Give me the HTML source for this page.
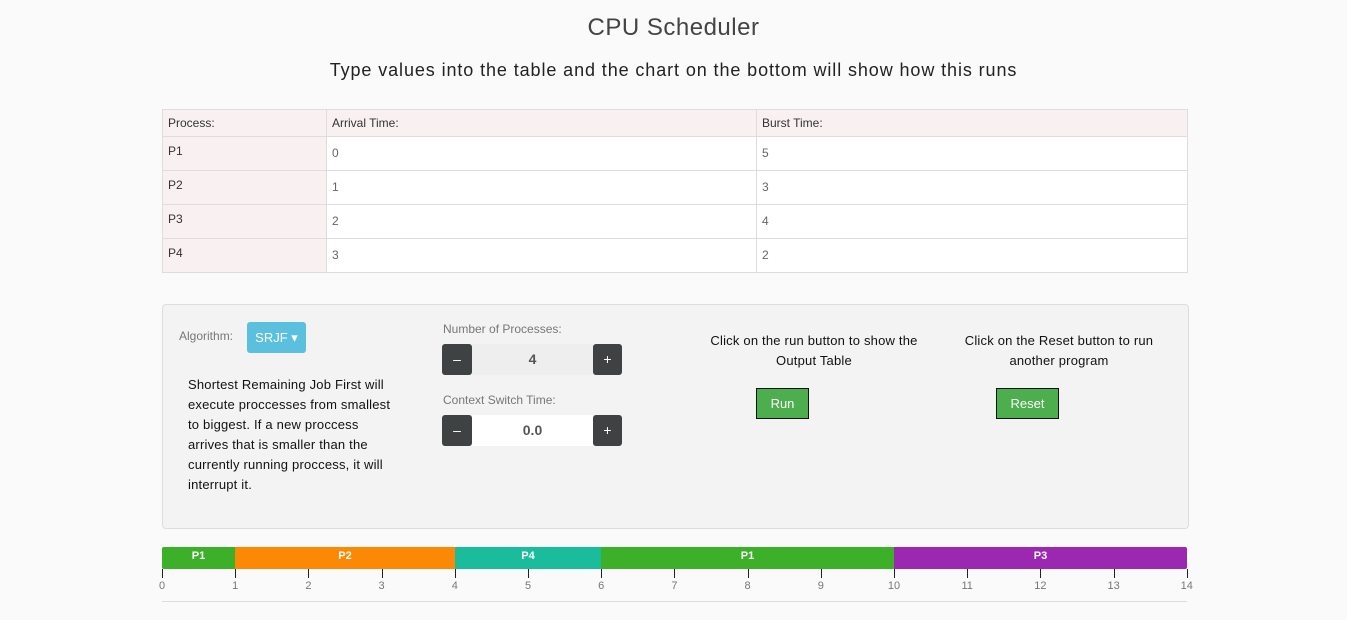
<!DOCTYPE html>
<html><head><style>
body{margin:0;width:1347px;height:620px;background:#fafafa;font-family:"Liberation Sans",sans-serif;position:relative;overflow:hidden;color:#333}
.a{position:absolute}
h1{position:absolute;top:14px;left:0;width:1347px;text-align:center;font-weight:normal;font-size:24px;margin:0;color:#444;letter-spacing:0.5px}
.sub{top:60px;left:0;width:1347px;text-align:center;font-size:18px;color:#222;letter-spacing:0.9px}
table{position:absolute;left:162px;top:109px;width:1026px;border-collapse:collapse;font-size:12px}
td{border:1px solid #ddd;padding:0 5px;vertical-align:top}
tr.h td{background:#f9f1f1;height:26px;line-height:26px;color:#333}
tr.r td{height:32px;background:#fff;color:#666;line-height:33px}
tr.r td:first-child{background:#f9f1f1;color:#333;line-height:28px}
.panel{left:162px;top:304px;width:1025px;height:223px;background:#f3f3f3;border:1px solid #ddd;border-radius:4px}
.btn{background:#4cae4c;color:#fff;border:1px solid #111;font-size:13px;text-align:center;line-height:29px}
.sp{background:#3e4242;color:#fff;text-align:center;border-radius:3px;font-size:14px;line-height:30px}
.bar{top:547px;height:22px;color:#fff;font-size:11px;font-weight:bold;text-align:center;line-height:18px}
.tk{top:569px;width:1px;height:9px;background:#222}
.lb{top:580px;width:20px;margin-left:-10px;text-align:center;font-size:11px;color:#777}
.nw{white-space:nowrap}
</style></head><body>
<h1>CPU Scheduler</h1>
<div class="a sub">Type values into the table and the chart on the bottom will show how this runs</div>
<table>
<tr class="h"><td style="width:153px">Process:</td><td style="width:419px">Arrival Time:</td><td>Burst Time:</td></tr>
<tr class="r"><td>P1</td><td>0</td><td>5</td></tr>
<tr class="r"><td style="height:31px">P2</td><td>1</td><td>3</td></tr>
<tr class="r"><td>P3</td><td>2</td><td>4</td></tr>
<tr class="r"><td style="height:31px">P4</td><td>3</td><td>2</td></tr>
</table>
<div class="a panel"></div>
<div class="a" style="left:179px;top:329px;font-size:12px;color:#777">Algorithm:</div>
<div class="a" style="left:247px;top:322px;width:59px;height:31px;background:#5bc0de;border-radius:3px;color:#fff;font-size:13px;line-height:31px;text-align:center">SRJF ▾</div>
<div class="a nw" style="left:188px;top:375px;font-size:13px;line-height:20px;color:#111;letter-spacing:0.2px">Shortest Remaining Job First will<br>execute proccesses from smallest<br>to biggest. If a new proccess<br>arrives that is smaller than the<br>currently running proccess, it will<br>interrupt it.</div>
<div class="a" style="left:443px;top:322px;font-size:12px;color:#777">Number of Processes:</div>
<div class="a sp" style="left:442px;top:344px;width:30px;height:31px">–</div>
<div class="a" style="left:472px;top:344px;width:121px;height:31px;background:#eee;text-align:center;line-height:31px;font-size:14px;color:#555;font-weight:bold">4</div>
<div class="a sp" style="left:593px;top:344px;width:29px;height:31px">+</div>
<div class="a" style="left:443px;top:393px;font-size:12px;color:#777">Context Switch Time:</div>
<div class="a sp" style="left:442px;top:415px;width:30px;height:31px">–</div>
<div class="a" style="left:472px;top:415px;width:121px;height:31px;background:#fff;text-align:center;line-height:31px;font-size:14px;color:#555;font-weight:bold">0.0</div>
<div class="a sp" style="left:593px;top:415px;width:29px;height:31px">+</div>
<div class="a nw" style="left:664px;top:331px;width:300px;text-align:center;font-size:13px;line-height:20px;color:#111;letter-spacing:0.2px">Click on the run button to show the<br>Output Table</div>
<div class="a nw" style="left:909px;top:331px;width:300px;text-align:center;font-size:13px;line-height:20px;color:#111;letter-spacing:0.2px">Click on the Reset button to run<br>another program</div>
<div class="a btn" style="left:756px;top:388px;width:51px;height:29px">Run</div>
<div class="a btn" style="left:996px;top:388px;width:61px;height:29px">Reset</div>
<div class="a bar" style="left:162px;width:73px;background:#3cb029;border-radius:2px 0 0 2px">P1</div>
<div class="a bar" style="left:235px;width:220px;background:#fb8905">P2</div>
<div class="a bar" style="left:455px;width:146px;background:#1abc9c">P4</div>
<div class="a bar" style="left:601px;width:293px;background:#3cb029">P1</div>
<div class="a bar" style="left:894px;width:293px;background:#9c27b0;border-radius:0 2px 2px 0">P3</div>
<div class="a" style="left:162px;top:601px;width:1025px;height:1px;background:#ddd"></div>
<div id="ax"></div>
<script>
var s='';for(var i=0;i<=14;i++){var x=162+i*73.2;s+='<div class="a tk" style="left:'+x+'px"></div><div class="a lb" style="left:'+x+'px">'+i+'</div>';}
document.getElementById('ax').innerHTML=s;
</script>
</body></html>
